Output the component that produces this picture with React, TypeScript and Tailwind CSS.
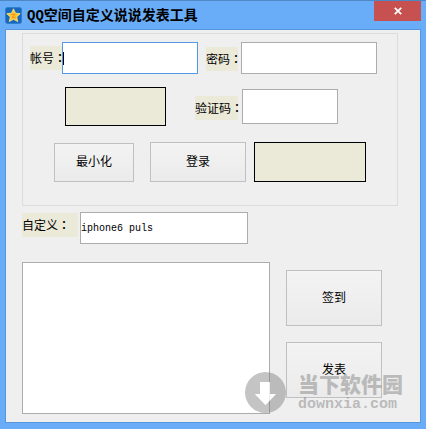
import type { ReactNode } from "react";

export default function App() {
  return (
    <div
      lang="zh-CN"
      className="flex min-h-screen w-full flex-col border-t border-[#4f86c4] bg-[#69acf7] px-[5px] pb-[6px] font-['Liberation_Mono','Noto_Sans_CJK_SC',monospace] text-xs text-black"
    >
      <TitleBar />

      <main className="relative flex grow flex-col border border-[#5795dc] bg-[#efefef] pt-[3px] pr-[22px] pb-2 pl-4">
        {/* Login */}
        <section className="flex flex-col border border-[#dcdcdc] pt-2 pb-[23px]">
          <div className="flex items-start pl-[7px]">
            <Label htmlFor="account" className="mt-1 w-8">
              帐号
            </Label>
            <div className="relative">
              <input
                id="account"
                className="block h-8 w-[136px] border border-[#5499e6] bg-white caret-transparent outline-none"
              />
              <span className="absolute top-[10px] left-px h-[13px] w-px bg-black" />
            </div>
            <Label htmlFor="password" className="mt-[5px] mr-[3px] ml-2 w-8">
              密码
            </Label>
            <input
              id="password"
              type="password"
              className="relative h-8 w-[136px] border border-[#acacb0] bg-white outline-none"
            />
          </div>

          <div className="mt-[13px] flex items-start pl-[42px]">
            <div className="h-[39px] w-[101px] border border-black bg-[#ebe9d8]" />
            <Label htmlFor="captcha" className="mt-[9px] mr-1 ml-[29px] w-[43px]">
              验证码
            </Label>
            <input
              id="captcha"
              className="relative mt-[2px] h-[35px] w-24 border border-[#acacb0] bg-white outline-none"
            />
          </div>

          <div className="mt-4 flex items-end pl-[31px]">
            <Button className="h-[39px] w-20">最小化</Button>
            <Button className="ml-4 h-10 w-24">登录</Button>
            <div className="ml-2 h-10 w-28 border border-black bg-[#ebe9d8]" />
          </div>
        </section>

        {/* Device name */}
        <div className="mt-[6px] flex items-start gap-[2px]">
          <Label htmlFor="custom" className="mt-px w-14">
            自定义
          </Label>
          <input
            id="custom"
            defaultValue="iphone6 puls"
            className="h-8 w-[168px] border border-[#acacb0] bg-white text-[10px] outline-none"
          />
        </div>

        {/* Message */}
        <div className="mt-[18px] flex grow gap-4">
          <textarea
            aria-label="说说"
            className="min-h-[152px] min-w-0 grow resize-none border border-[#acacb0] bg-white p-px outline-none"
          />
          <div className="mr-4 flex flex-col gap-4 pt-2">
            <Button className="h-14 w-24">签到</Button>
            <Button className="h-14 w-24">发表</Button>
          </div>
        </div>

        <Watermark />
      </main>
    </div>
  );
}

function TitleBar() {
  return (
    <header className="flex h-7 items-start">
      <div className="mt-[6px] flex grow items-center gap-[5px]">
        <Logo />
        <h1 className="text-sm leading-4 font-bold whitespace-nowrap">
          QQ空间自定义说说发表工具
        </h1>
      </div>
      <button
        type="button"
        aria-label="关闭"
        className="flex h-5 w-[47px] items-center justify-center bg-[#c75050]"
      >
        <svg width="8" height="8" viewBox="0 0 8 8" aria-hidden="true">
          <path d="M0.8 0.8 7.2 7.2M7.2 0.8 0.8 7.2" stroke="#fff" strokeWidth="1.8" />
        </svg>
      </button>
    </header>
  );
}

type BoxProps = { className: string; children: ReactNode };

function Label({ htmlFor, className, children }: BoxProps & { htmlFor: string }) {
  return (
    <label
      htmlFor={htmlFor}
      className={`h-6 shrink-0 bg-[#ebe9d8] leading-6 whitespace-nowrap ${className}`}
    >
      {children}
      <span className="font-['Noto_Sans_CJK_TC',sans-serif] font-medium" lang="zh-TW">
        ：
      </span>
    </label>
  );
}

function Button({ className, children }: BoxProps) {
  return (
    <button
      type="button"
      className={`shrink-0 border border-[#c0c0c0] bg-linear-to-b from-[#f3f3f3] to-[#ebebeb] pt-px ${className}`}
    >
      {children}
    </button>
  );
}

function Logo() {
  return (
    <svg width="17" height="17" viewBox="0 0 17 17" aria-hidden="true">
      <rect x="0.5" y="0.5" width="16" height="16" rx="2" fill="#1767bd" stroke="#2f7fd0" />
      <path
        d="M8.5 1.8 10.5 6.2 15.2 6.7 11.7 9.9 12.7 14.6 8.5 12.2 4.3 14.6 5.3 9.9 1.8 6.7 6.5 6.2Z"
        fill="#fdc52c"
        stroke="#fee68a"
        strokeWidth="0.8"
        strokeLinejoin="round"
      />
      <path d="M6.2 7.4H10.2L7 10.4H10.6" fill="none" stroke="#ee8a1e" strokeWidth="0.9" />
    </svg>
  );
}

function Watermark() {
  return (
    <div className="pointer-events-none absolute right-[17px] bottom-[9px] flex items-center gap-3 text-[#7c7c7c]">
      <svg width="41" height="41" viewBox="0 0 41 41" aria-hidden="true">
        <path
          fillRule="evenodd"
          fill="currentColor"
          fillOpacity="0.45"
          d="M20.5 0a20.5 20.5 0 1 1 0 41a20.5 20.5 0 1 1 0-41ZM15 10V22H10L20.5 33 31 22H25V10Z"
        />
        <path fill="#fff" fillOpacity="0.8" d="M15 10V22H10L20.5 33 31 22H25V10Z" />
      </svg>
      <div className="flex flex-col gap-1 opacity-45">
        <span className="font-['Noto_Sans_CJK_SC',sans-serif] text-[21px] leading-5 font-black">
          当下软件园
        </span>
        <span className="text-[15px] leading-4 font-bold">downxia.com</span>
      </div>
    </div>
  );
}
